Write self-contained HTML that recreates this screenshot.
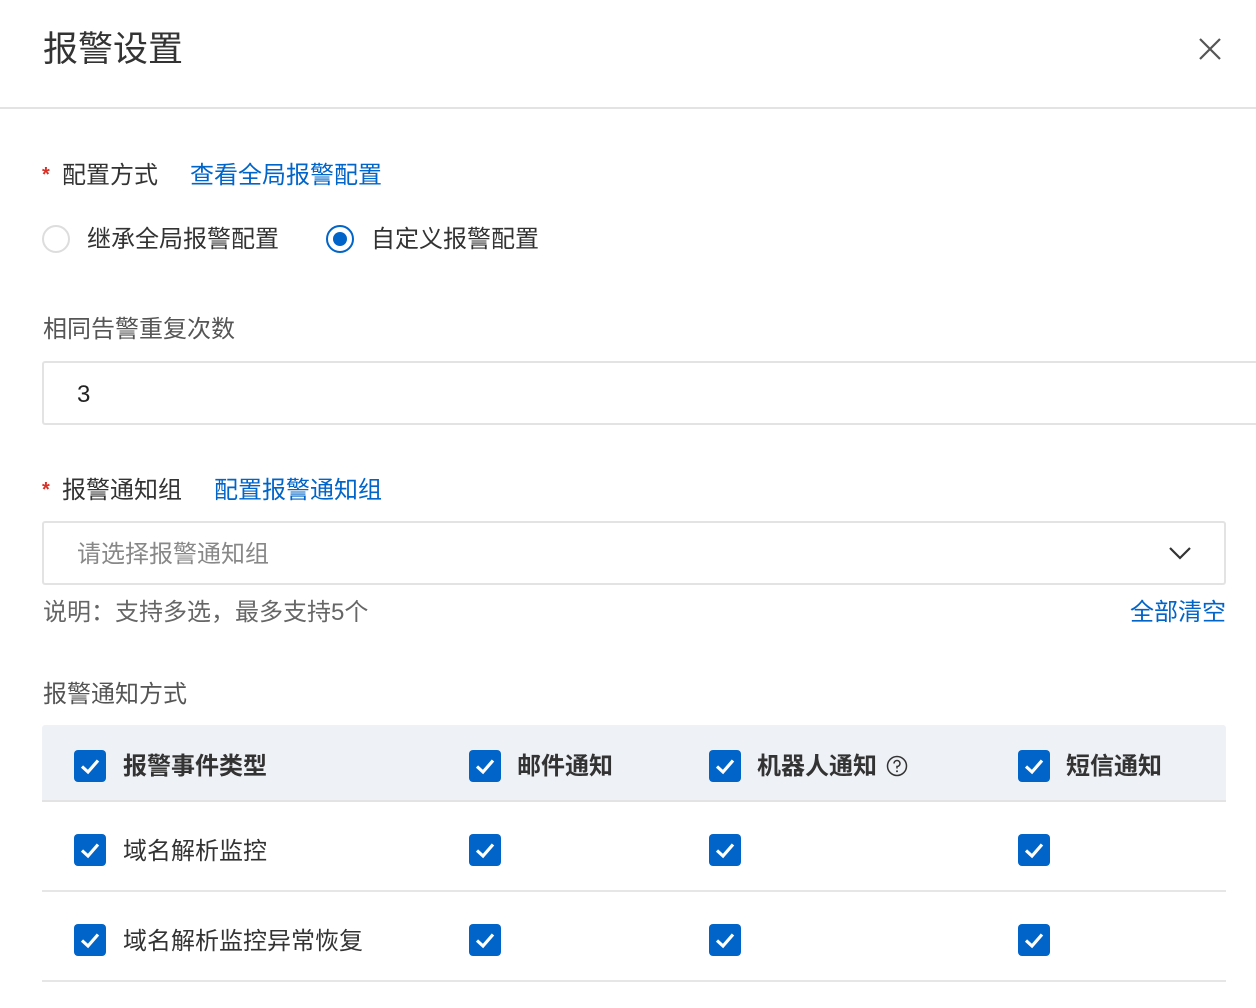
<!DOCTYPE html>
<html><head><meta charset="utf-8"><style>
*{margin:0;padding:0;box-sizing:border-box}
body{width:1256px;height:1008px;background:#fff;position:relative;overflow:hidden;font-family:"Liberation Sans","Noto Sans CJK SC",sans-serif;color:#333;font-size:24px}
.a{position:absolute;line-height:1;white-space:nowrap}
.blue{color:#0064c8}
.star{color:#d93026;font-weight:bold}
.gray{color:#555}
.cb{position:absolute;width:32px;height:32px;background:#0064c8;border-radius:4px}
.cb svg{position:absolute;left:0;top:0}
.b{font-weight:bold}
</style></head><body>
<div class="a" style="left:43px;top:32px;font-size:35px;color:#333">报警设置</div>
<svg class="a" style="left:1198px;top:37px" width="24" height="24"><path d="M2 2L22 22M22 2L2 22" stroke="#555" stroke-width="2.2"/></svg>
<div class="a" style="left:0;top:107px;width:1256px;height:2px;background:#e3e3e3"></div>

<div class="a" style="left:42px;top:165px;font-size:20px"><span class="star">*</span></div>
<div class="a" style="left:62px;top:164px">配置方式</div>
<div class="a blue" style="left:190px;top:164px">查看全局报警配置</div>

<div class="a" style="left:42px;top:225px;width:28px;height:28px;border:2px solid #ddd;border-radius:50%"></div>
<div class="a" style="left:87px;top:228px">继承全局报警配置</div>
<div class="a" style="left:326px;top:225px;width:28px;height:28px;border:2px solid #0064c8;border-radius:50%"></div>
<div class="a" style="left:333px;top:232px;width:14px;height:14px;background:#0064c8;border-radius:50%"></div>
<div class="a" style="left:371px;top:228px">自定义报警配置</div>

<div class="a gray" style="left:43px;top:318px">相同告警重复次数</div>
<div class="a" style="left:42px;top:361px;width:1230px;height:64px;border:2px solid #e3e3e3;border-radius:3px"></div>
<div class="a" style="left:77px;top:383px;color:#222">3</div>

<div class="a" style="left:42px;top:480px;font-size:20px"><span class="star">*</span></div>
<div class="a" style="left:62px;top:479px">报警通知组</div>
<div class="a blue" style="left:214px;top:479px">配置报警通知组</div>

<div class="a" style="left:42px;top:521px;width:1184px;height:64px;border:2px solid #e3e3e3;border-radius:3px"></div>
<div class="a" style="left:77px;top:543px;color:#888">请选择报警通知组</div>
<svg class="a" style="left:1168px;top:545px" width="24" height="16"><path d="M2 3L12 13L22 3" stroke="#333" stroke-width="2.2" fill="none"/></svg>

<div class="a" style="left:43px;top:601px;color:#666">说明：支持多选，最多支持5个</div>
<div class="a blue" style="left:1130px;top:601px">全部清空</div>

<div class="a gray" style="left:43px;top:683px">报警通知方式</div>

<div class="a" style="left:42px;top:725px;width:1184px;height:76px;background:#eef1f6;border-radius:3px 3px 0 0"></div>
<div class="a" style="left:42px;top:800px;width:1184px;height:2px;background:#e3e3e3"></div>
<div class="a" style="left:42px;top:890px;width:1184px;height:2px;background:#e6e6e6"></div>
<div class="a" style="left:42px;top:980px;width:1184px;height:2px;background:#e6e6e6"></div>

<div class="a b" style="left:123px;top:755px">报警事件类型</div>
<div class="a b" style="left:517px;top:755px">邮件通知</div>
<div class="a b" style="left:757px;top:755px">机器人通知</div>
<svg class="a" style="left:886px;top:755px" width="22" height="22"><circle cx="11" cy="11" r="9.5" fill="none" stroke="#333" stroke-width="1.5"/><path d="M8 8.5a3 3 0 1 1 3 3v2" fill="none" stroke="#333" stroke-width="1.5"/><circle cx="11" cy="16.3" r="1" fill="#333"/></svg>
<div class="a b" style="left:1066px;top:755px">短信通知</div>

<div class="a" style="left:123px;top:840px">域名解析监控</div>
<div class="a" style="left:123px;top:930px">域名解析监控异常恢复</div>

<div id="cbs"></div>
<script>
var xs=[74,469,709,1018],ys=[750,834,924],h='';
ys.forEach(function(y){xs.forEach(function(x){h+='<div class="cb" style="left:'+x+'px;top:'+y+'px"><svg width="32" height="32"><path d="M8 16.5L14 22L24 10.5" stroke="#fff" stroke-width="3.2" fill="none"/></svg></div>';});});
document.getElementById('cbs').innerHTML=h;
</script>
</body></html>
